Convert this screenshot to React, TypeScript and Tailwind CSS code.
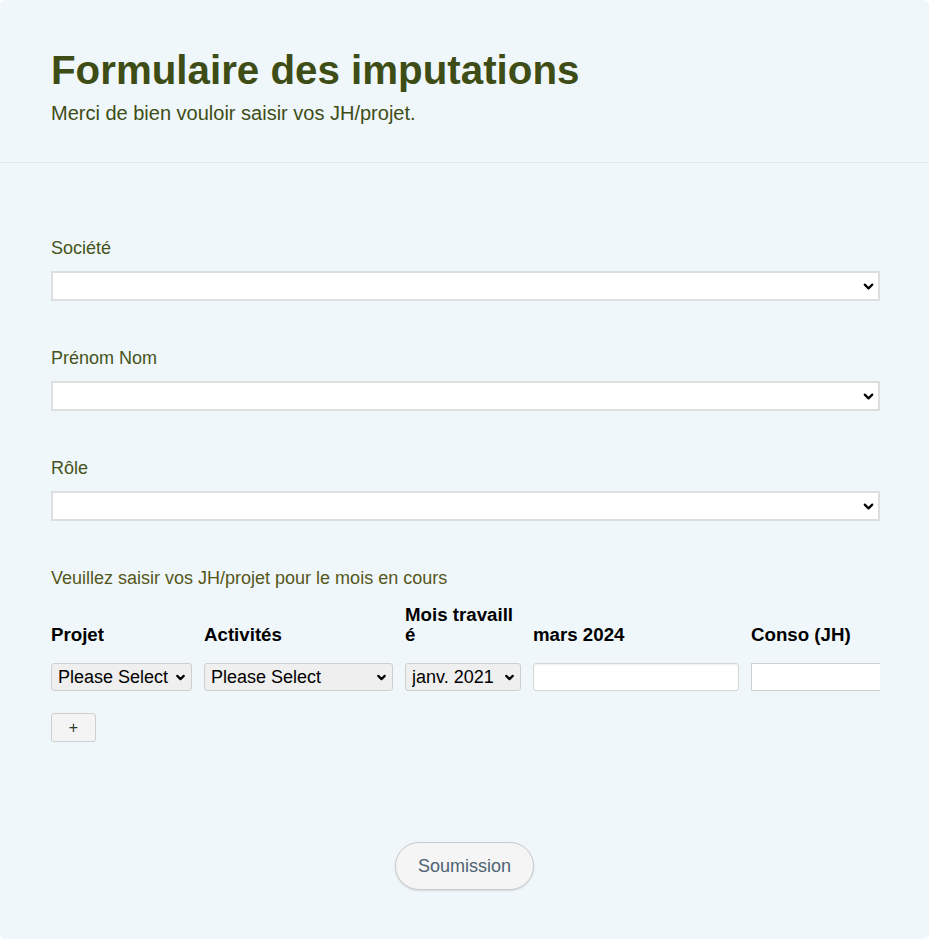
import { ChevronDown } from 'lucide-react';

const font = { fontFamily: '"Liberation Sans", Arial, sans-serif' };

function BigSelect({ label }: { label: string }) {
  return (
    <div className="flex flex-col">
      <label className="text-[18px] leading-[26px] text-[#46531c] mb-[10px]">{label}</label>
      <div className="relative">
        <select className="appearance-none w-full h-[30px] bg-white border-2 border-[#dcdfe0] px-2 outline-none" />
        <ChevronDown className="absolute right-[4px] top-[8px] w-[15px] h-[15px] text-black pointer-events-none" strokeWidth={3.5} />
      </div>
    </div>
  );
}

function SmallSelect({ value }: { value: string }) {
  return (
    <div className="relative">
      <select className="appearance-none w-full h-[28px] bg-[#efefef] border border-[#cfcfcf] rounded-[3px] pl-[6px] pr-5 text-[18px] leading-[26px] text-black outline-none">
        <option>{value}</option>
      </select>
      <ChevronDown className="absolute right-[5px] top-[8px] w-[13px] h-[13px] text-black pointer-events-none" strokeWidth={4} />
    </div>
  );
}

const head = 'text-[18.7px] leading-[20px] font-bold text-black';

export default function App() {
  return (
    <div className="min-h-screen bg-white" style={font}>
      <div className="w-[929px] h-[939px] bg-[#eff7fa] rounded-[6px] overflow-hidden flex flex-col">
        <div className="pl-[51px] pr-[49px] pt-[48px] pb-[34px] border-b border-[#e1e7e9]">
          <h1 className="text-[40.3px] leading-[46px] font-bold text-[#3e4d16]">Formulaire des imputations</h1>
          <p className="mt-[4px] text-[20px] leading-[30px] text-[#3e4d16]">Merci de bien vouloir saisir vos JH/projet.</p>
        </div>

        <div className="pl-[51px] pr-[49px] pt-[72px] flex flex-col">
          <div className="flex flex-col gap-[44px]">
            <BigSelect label="Société" />
            <BigSelect label="Prénom Nom" />
            <BigSelect label="Rôle" />
          </div>

          <p className="mt-[44px] text-[18px] leading-[26px] text-[#55561a]">Veuillez saisir vos JH/projet pour le mois en cours</p>

          <div className="mt-[14px] overflow-hidden">
            <div className="grid grid-cols-[141px_189px_116px_206px_1fr] gap-x-[12px] items-end">
              <div className={head}>Projet</div>
              <div className={head}>Activités</div>
              <div className={`${head} w-[114px] break-all`}>Mois travaillé</div>
              <div className={head}>mars 2024</div>
              <div className={head}>Conso (JH)</div>
            </div>
            <div className="grid grid-cols-[141px_189px_116px_206px_1fr] gap-x-[12px] items-center mt-[18px]">
              <SmallSelect value="Please Select" />
              <SmallSelect value="Please Select" />
              <SmallSelect value="janv. 2021" />
              <input className="h-[28px] bg-white border border-[#d6d6d6] rounded-[3px] shadow-[inset_0_1px_2px_rgba(0,0,0,0.06)] outline-none" />
              <input className="h-[28px] w-[160px] bg-white border border-[#cfcfcf] outline-none" />
            </div>
          </div>

          <div className="mt-[22px]">
            <button className="w-[45px] h-[29px] bg-[#f4f4f4] border border-[#cfcfcf] rounded-[3px] text-[16px] leading-none text-[#2f3a33]">+</button>
          </div>

          <div className="mt-[100px] flex justify-center pr-[2px]">
            <button className="w-[139px] h-[48px] rounded-full bg-[#f5f5f5] border border-[#cbcbcb] shadow-[0_1px_2px_rgba(0,0,0,0.12)] text-[18px] text-[#4d6272]">Soumission</button>
          </div>
        </div>
      </div>
    </div>
  );
}
